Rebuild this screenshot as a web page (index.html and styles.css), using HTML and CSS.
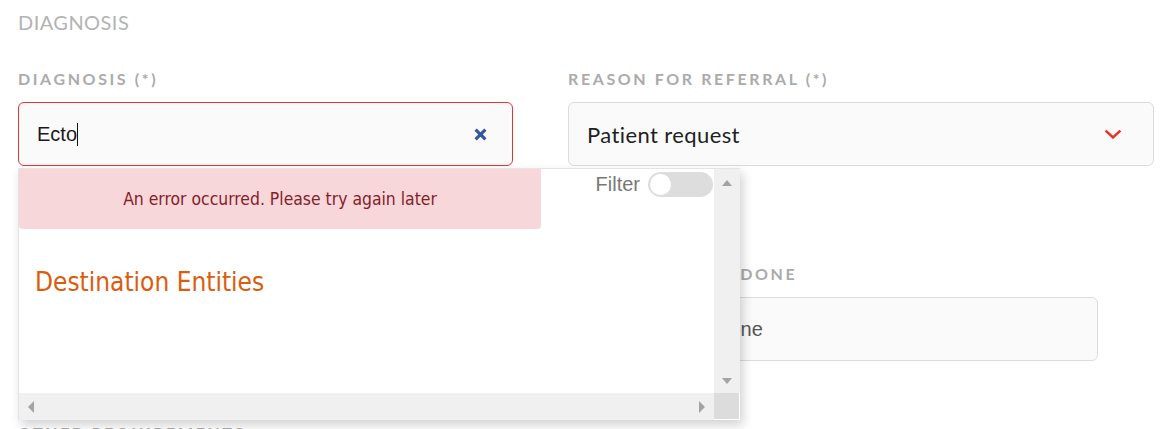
FILE: index.html
```html
<!DOCTYPE html>
<html lang="en">
<head>
<meta charset="utf-8">
<title>Diagnosis</title>
<link rel="stylesheet" href="styles.css">
</head>
<body>
<main class="page">
  <h2 class="section-title">DIAGNOSIS</h2>

  <div class="row row-top">
    <div class="field field-diagnosis">
      <div class="label">DIAGNOSIS (*)</div>
      <div class="input input-error">
        <span class="value">Ecto</span><span class="caret"></span>
        <svg class="clear-icon" viewBox="0 0 13 13" aria-hidden="true">
          <path d="M1.6 1.6 L11.4 11.4 M11.4 1.6 L1.6 11.4" stroke="#3656a2" stroke-width="3.2" fill="none"/>
        </svg>
      </div>

      <div class="dropdown">
        <div class="dd-body">
          <div class="dd-viewport">
            <div class="dd-top">
              <div class="alert">An error occurred. Please try again later</div>
              <div class="filter">
                <span class="filter-label">Filter</span>
                <span class="toggle"><span class="knob"></span></span>
              </div>
            </div>
            <div class="dd-heading">Destination Entities</div>
          </div>
          <div class="vscroll">
            <span class="arrow up"></span>
            <span class="arrow down"></span>
          </div>
        </div>
        <div class="hscroll-row">
          <div class="hscroll">
            <span class="arrow left"></span>
            <span class="arrow right"></span>
          </div>
          <div class="corner"></div>
        </div>
      </div>
    </div>

    <div class="field">
      <div class="label">REASON FOR REFERRAL (*)</div>
      <div class="input select">
        <span class="select-value">Patient request</span>
        <svg class="chevron" viewBox="0 0 18 10" aria-hidden="true">
          <polyline points="1.6,1.6 9,8.4 16.4,1.6" stroke="#e8332a" stroke-width="2.6" fill="none"/>
        </svg>
      </div>
    </div>
  </div>

  <div class="row row-mid">
    <div class="field">
      <div class="label">OBSERVATIONS</div>
      <div class="input"></div>
    </div>
    <div class="field">
      <div class="label">LAB DONE</div>
      <div class="input"><span class="placeholder">None</span></div>
    </div>
  </div>

  <div class="row row-bottom">
    <div class="label">OTHER REQUIREMENTS</div>
  </div>
</main>
</body>
</html>
```

FILE: styles.css
```css
* { box-sizing: border-box; }

html, body {
  margin: 0;
  background: #ffffff;
}

body {
  width: 1167px;
  height: 429px;
  overflow: hidden;
  font-family: Lato, "Noto Sans", sans-serif;
  color: #222;
}

.page {
  padding: 0 18px;
}

.section-title {
  margin: 10px 0 0;
  font: 400 20px/24px Lato, sans-serif;
  letter-spacing: 0.45px;
  color: #b3b3b3;
}

.row {
  display: grid;
  column-gap: 55px;
}

.row-top {
  margin-top: 36px;
  grid-template-columns: 495px 586px;
}

.row-mid {
  margin-top: 99px;
  grid-template-columns: 623px 402px;
}

.row-bottom {
  margin-top: 63px;
}

.field {
  position: relative;
}

.label {
  font: 700 16px/18px Lato, sans-serif;
  letter-spacing: 2.6px;
  color: #ababab;
  margin-bottom: 14px;
  white-space: nowrap;
}

.input {
  height: 64px;
  border: 1px solid #dcdcdc;
  border-radius: 6px;
  background: #fafafa;
  display: flex;
  align-items: center;
  padding: 0 18px;
}

.input-error {
  border-color: #e3342f;
  padding-right: 25px;
}

.value {
  font: 20px "Liberation Sans", Arial, sans-serif;
  color: #1a1a1a;
}

.caret {
  width: 1px;
  height: 23px;
  background: #111;
}

.clear-icon {
  margin-left: auto;
  width: 13px;
  height: 13px;
}

.select {
  padding-right: 31px;
}

.select-value {
  font: 400 22px Lato, sans-serif;
  letter-spacing: 0.4px;
  color: #1f1f1f;
}

.chevron {
  margin-left: auto;
  width: 18px;
  height: 10px;
}

.placeholder {
  font: 20px "Liberation Sans", Arial, sans-serif;
  color: #555;
}

/* dropdown */
.dropdown {
  position: absolute;
  left: 0;
  top: calc(100% + 2px);
  width: 722px;
  height: 252px;
  background: #fff;
  border-left: 1px solid #e4e4e4;
  border-top: 1px solid #e4e4e4;
  box-shadow: 3px 5px 10px rgba(0, 0, 0, 0.18);
  display: flex;
  flex-direction: column;
  z-index: 5;
}

.dd-body {
  flex: 1;
  display: flex;
  min-height: 0;
}

.dd-viewport {
  flex: 1;
  overflow: hidden;
}

.dd-top {
  display: flex;
  justify-content: space-between;
  align-items: flex-start;
}

.alert {
  width: 522px;
  height: 61px;
  margin-top: -1px;
  background: #f8d7da;
  color: #842029;
  border-radius: 0 0 4px 4px;
  display: flex;
  align-items: center;
  justify-content: center;
  font-family: "DejaVu Sans Condensed", "DejaVu Sans", sans-serif;
  font-stretch: condensed;
  font-size: 17.4px;
}

.filter {
  display: flex;
  align-items: center;
  gap: 8px;
  margin-top: 3px;
  padding-right: 1px;
}

.filter-label {
  font: 20px "Liberation Sans", Arial, sans-serif;
  color: #777;
}

.toggle {
  width: 65px;
  height: 25px;
  border-radius: 13px;
  background: #dddddd;
  position: relative;
}

.knob {
  position: absolute;
  left: 2px;
  top: 2px;
  width: 21px;
  height: 21px;
  border-radius: 50%;
  background: #fff;
}

.dd-heading {
  margin: 38px 0 0 16px;
  font-family: "DejaVu Sans Condensed", "DejaVu Sans", sans-serif;
  font-stretch: condensed;
  font-size: 26px;
  color: #dd5b0d;
  white-space: nowrap;
}

.vscroll {
  width: 26px;
  background: #f0f0f0;
  display: flex;
  flex-direction: column;
  justify-content: space-between;
  align-items: center;
  padding: 11px 0 9px;
}

.hscroll-row {
  height: 27px;
  display: flex;
}

.hscroll {
  flex: 1;
  background: #f0f0f0;
  display: flex;
  justify-content: space-between;
  align-items: center;
  padding: 0 9px;
}

.corner {
  width: 26px;
  background: #dcdcdc;
  border-right: 1px solid #fff;
  border-bottom: 1px solid #fff;
}

.arrow {
  width: 0;
  height: 0;
  border-style: solid;
}

.arrow.up {
  border-width: 0 5.5px 6px;
  border-color: transparent transparent #a3a3a3;
}

.arrow.down {
  border-width: 6px 5.5px 0;
  border-color: #a3a3a3 transparent transparent;
}

.arrow.left {
  border-width: 6px 6px 6px 0;
  border-color: transparent #a3a3a3 transparent transparent;
}

.arrow.right {
  border-width: 6px 0 6px 6px;
  border-color: transparent transparent transparent #a3a3a3;
}
```
